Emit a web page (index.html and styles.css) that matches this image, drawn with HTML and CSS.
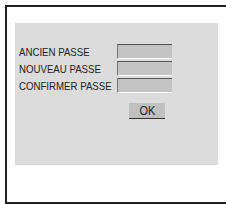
FILE: index.html
```html
<!DOCTYPE html>
<html lang="fr">
<head>
    <meta charset="UTF-8">
    <title>Mot de passe</title>
    <link rel="stylesheet" href="styles.css">
</head>
<body>
    <div class="frame">
        <div class="panel">
            <div class="row">
                <span class="label"><span class="narrow">ANCIEN PASSE</span></span>
                <span class="field"></span>
            </div>
            <div class="row">
                <span class="label"><span class="narrow">NOUVEAU PASSE</span></span>
                <span class="field"></span>
            </div>
            <div class="row">
                <span class="label"><span class="narrow">CONFIRMER PASSE</span></span>
                <span class="field"></span>
            </div>
            <div class="actions">
                <span class="btn"><span class="narrow">OK</span></span>
            </div>
        </div>
    </div>
</body>
</html>
```

FILE: styles.css
```css
body {
    margin: 0;
    background: #fff;
    font-family: "Liberation Sans", Arial, sans-serif;
}
.frame {
    margin: 5px 0 0 5px;
    border: 2px solid #222;
    padding: 16px 8px 0 8px;
    width: 203px;
    height: 179px;
}
.panel {
    background: #dcdcdc;
    height: 142px;
    padding: 20px 0 0 4px;
    box-sizing: border-box;
}
.row {
    display: flex;
    align-items: center;
    height: 17px;
}
.label {
    width: 98px;
    font-size: 11.5px;
    color: #222;
    white-space: nowrap;
}
.narrow {
    display: inline-block;
    transform: scaleX(0.84);
    transform-origin: left center;
}
.field {
    width: 54px;
    height: 13px;
    background: #c4c4c4;
    border-top: 1px solid #555;
    border-left: 1px solid #777;
    border-bottom: 1px solid #fff;
}
.actions {
    padding: 7px 0 0 110px;
}
.btn {
    display: inline-block;
    width: 36px;
    height: 15px;
    line-height: 15px;
    background: #c0c0c0;
    border-bottom: 1px solid #333;
    text-align: center;
    font-size: 13px;
    color: #222;
}
.btn .narrow {
    transform-origin: center;
}
```
